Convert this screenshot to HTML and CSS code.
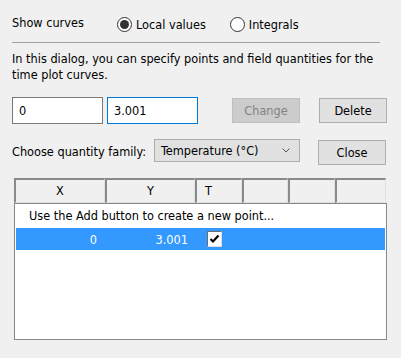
FILE: index.html
```html
<!DOCTYPE html>
<html lang="en">
<head>
    <meta charset="UTF-8">
    <title>Time Plot Points</title>
    <link rel="stylesheet" href="styles.css">
</head>
<body>
    <div class="dialog">
        <div class="curves-row">
            <span class="curves-label">Show curves</span>
            <label class="radio">
                <span class="radio-circle checked"></span>
                Local values
            </label>
            <label class="radio">
                <span class="radio-circle"></span>
                Integrals
            </label>
        </div>
        <div class="separator"></div>

        <p class="intro">In this dialog, you can specify points and field quantities for the time plot curves.</p>

        <div class="point-row">
            <input class="field" type="text" value="0">
            <input class="field focused" type="text" value="3.001">
            <button class="btn disabled" disabled>Change</button>
            <button class="btn">Delete</button>
        </div>

        <div class="family-row">
            <span class="family-label">Choose quantity family:</span>
            <div class="combo">
                <span>Temperature (°C)</span>
                <svg width="8" height="5" viewBox="0 0 8 5">
                    <path d="M0.5 0.5 L4 4 L7.5 0.5" fill="none" stroke="#555" stroke-width="1"/>
                </svg>
            </div>
            <button class="btn close-btn">Close</button>
        </div>

        <div class="points-list">
            <div class="list-header">
                <div class="col col-x">X</div>
                <div class="col col-y">Y</div>
                <div class="col col-t">T</div>
                <div class="col col-a"></div>
                <div class="col col-b"></div>
                <div class="col col-c"></div>
            </div>
            <div class="list-body">
                <div class="hint-row">Use the Add button to create a new point...</div>
                <div class="point selected">
                    <span class="cell-x">0</span>
                    <span class="cell-y">3.001</span>
                    <span class="cell-t">
                        <span class="check">
                            <svg width="11" height="10" viewBox="0 0 11 10">
                                <path d="M1.5 5 L4 7.5 L9.5 1.5" fill="none" stroke="#000" stroke-width="2.2"/>
                            </svg>
                        </span>
                    </span>
                </div>
            </div>
        </div>
    </div>
</body>
</html>
```

FILE: styles.css
```css
body {
    margin: 0;
    background: #f0f0f0;
    font-family: 'DejaVu Sans Condensed', 'DejaVu Sans', sans-serif;
    font-size: 12.6px;
    color: #000;
}

.dialog {
    padding: 14px 14px 0 12px;
    display: flex;
    flex-direction: column;
}

.curves-row {
    display: flex;
    align-items: center;
    height: 21px;
}

.curves-label {
    width: 105px;
    margin-top: -4px;
}

.radio {
    display: flex;
    align-items: center;
    gap: 4px;
    margin-right: 24px;
}

.radio-circle {
    width: 13px;
    height: 13px;
    border: 1px solid #333;
    border-radius: 50%;
    background: #fff;
    display: flex;
    align-items: center;
    justify-content: center;
}

.radio-circle.checked::after {
    content: '';
    width: 9px;
    height: 9px;
    border-radius: 50%;
    background: #333;
}

.separator {
    height: 1px;
    background: #a0a0a0;
    margin: 7px 7px 0 0;
}

.intro {
    margin: 8px 0 0;
    line-height: 16px;
}

.point-row {
    display: flex;
    align-items: center;
    margin-top: 14px;
}

.field {
    width: 91px;
    height: 27px;
    box-sizing: border-box;
    border: 1px solid #7a7a7a;
    padding: 0 6px;
    font-family: inherit;
    font-size: 12.6px;
    margin: 0 4px 0 0;
    outline: none;
}

.field.focused {
    border-color: #0078d7;
}

.btn {
    width: 68px;
    height: 25px;
    box-sizing: border-box;
    border: 1px solid #adadad;
    background: #e1e1e1;
    font-family: inherit;
    font-size: 12.6px;
    color: #000;
    padding: 0;
}

.point-row .disabled {
    margin-left: 30px;
    background: #cccccc;
    border-color: #bfbfbf;
    color: #838383;
}

.point-row .btn:last-child {
    margin-left: 19px;
}

.family-row {
    display: flex;
    align-items: center;
    margin-top: 13px;
}

.family-label {
    width: 142px;
}

.combo {
    width: 146px;
    height: 23px;
    box-sizing: border-box;
    border: 1px solid #adadad;
    background: #e1e1e1;
    display: flex;
    align-items: center;
    justify-content: space-between;
    padding: 0 9px 0 6px;
    margin-top: -2px;
}

.close-btn {
    margin-left: 18px;
    margin-top: 3px;
}

.points-list {
    margin: 13px 0 0 2px;
    width: 373px;
}

.list-header {
    display: flex;
    height: 25px;
}

.col {
    box-sizing: border-box;
    border-style: solid;
    border-width: 2px 1px 1px 2px;
    border-color: #8a8a8a #e0e0e0 #e0e0e0 #8a8a8a;
    background: #f0f0f0;
    display: flex;
    align-items: center;
    justify-content: center;
    padding-bottom: 1px;
}

.col-x { width: 91px; }
.col-y { width: 90px; }
.col-t { width: 47px; justify-content: flex-start; padding-left: 8px; }
.col-a { width: 46px; }
.col-b { width: 47px; }
.col-c { width: 51px; }

.list-body {
    height: 137px;
    box-sizing: border-box;
    border: 1px solid #828790;
    background: #fff;
    padding: 1px;
}

.hint-row {
    height: 23px;
    line-height: 22px;
    padding-left: 13px;
}

.point {
    display: flex;
    align-items: center;
    height: 22px;
}

.point.selected {
    background: #3399ff;
    color: #fff;
}

.cell-x {
    width: 81px;
    text-align: right;
}

.cell-y {
    width: 91px;
    text-align: right;
}

.cell-t {
    padding-left: 19px;
    display: flex;
}

.check {
    width: 15px;
    height: 16px;
    box-sizing: border-box;
    background: #fff;
    border: 1px solid;
    border-color: #6e6e6e #dcdcdc #dcdcdc #6e6e6e;
    display: flex;
    align-items: center;
    justify-content: center;
}
```
